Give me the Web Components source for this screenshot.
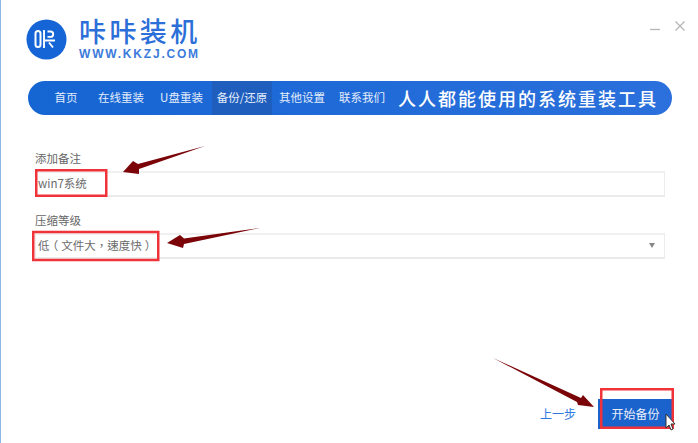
<!DOCTYPE html>
<html lang="zh">
<head>
<meta charset="utf-8">
<title>咔咔装机</title>
<style>
html, body { margin: 0; height: 100%; background: #fff; }
body { font-family: "Noto Sans CJK SC", "Liberation Sans", sans-serif; }
</style>
</head>
<body>
<backup-app></backup-app>

<script>
const FONT = `"Noto Sans CJK SC", "Liberation Sans", sans-serif`;
const LATIN_FIRST = `"Liberation Sans", "Noto Sans CJK SC", sans-serif`;

class AppHeader extends HTMLElement {
  constructor() {
    super();
    this.attachShadow({ mode: "open" });
    this.shadowRoot.innerHTML = `
<style>
:host { display: flex; height: 81px; box-sizing: border-box; padding: 19px 0 0 25px; position: relative; }
.mark { width: 41px; height: 41px; flex: none; }
.brand { margin-left: 12px; display: flex; flex-direction: column; color: #2c6fd8; }
.name { font: 500 27px/28px ${LATIN_FIRST}; letter-spacing: 3.4px; height: 29px; white-space: nowrap; }
.url { font: 700 12px/12px ${LATIN_FIRST}; letter-spacing: 1.8px; white-space: nowrap; color: #3d7bdb; }
.controls { position: absolute; right: 13px; top: 21px; display: flex; gap: 15px; }
svg { display: block; }
</style>
<svg class="mark" viewBox="0 0 41 41">
  <circle cx="20.5" cy="20.5" r="20" fill="#1565d6"/>
  <rect x="9.5" y="12" width="5" height="16" rx="2.5" fill="none" stroke="#fff" stroke-width="2"/>
  <path d="M18 11v18M19 21.500h10M21.500 12.500h3a2.700 2.700 0 0 1 0 5.400h-3M23 23.500l4 5" fill="none" stroke="#fff" stroke-width="1.900"/>
</svg>
<div class="brand">
  <div class="name">咔咔装机</div>
  <div class="url">WWW.KKZJ.COM</div>
</div>
<div class="controls">
  <svg width="10" height="10" viewBox="0 0 10 10"><path d="M0 8.500h10" stroke="#b5b5b5" stroke-width="1.3"/></svg>
  <svg width="10" height="10" viewBox="0 0 10 10"><path d="M.5 .5l9 9M9.500 .5l-9 9" stroke="#b5b5b5" stroke-width="1.3"/></svg>
</div>`;
  }
}

class NavItem extends HTMLElement {
  constructor() {
    super();
    this.attachShadow({ mode: "open" });
    this.shadowRoot.innerHTML = `
<style>
:host { display: flex; align-items: center; justify-content: center; width: 60px; flex: none; font: 11.5px/1 ${FONT}; color: #e3edfb; white-space: nowrap; }
:host([active]) { background: #1f5ebd; }
</style>
<slot></slot>`;
  }
}

class NavBar extends HTMLElement {
  constructor() {
    super();
    this.attachShadow({ mode: "open" });
    this.shadowRoot.innerHTML = `
<style>
:host { display: flex; height: 34px; margin: 0 26px 0 27px; padding-left: 13px; border-radius: 17px; background: linear-gradient(90deg, #1565d3, #2b70dc); }
.slogan { margin-left: 6px; align-self: center; font: 500 18px/1 ${FONT}; letter-spacing: 2px; color: #fff; white-space: nowrap; }
</style>
<slot></slot>
<div class="slogan">人人都能使用的系统重装工具</div>`;
  }
}

class FormField extends HTMLElement {
  constructor() {
    super();
    this.attachShadow({ mode: "open" });
    this.shadowRoot.innerHTML = `
<style>
:host { display: block; }
label { display: block; font: 11.5px/16px ${FONT}; color: #666; margin-bottom: 5px; }
.box { position: relative; display: flex; align-items: center; height: 26px; box-sizing: border-box; padding-left: 2px;
  border: 1px solid #ececec; border-top: 2px solid #f0f0f0; border-bottom: 2px solid #ebebeb; font: 11.5px/1 ${FONT}; color: #6a6a6a; white-space: pre; }
.caret { display: none; position: absolute; right: 9px; top: 8px; width: 0; height: 0; border: 3.5px solid transparent; border-top: 5px solid #888; border-bottom: 0; }
:host([select]) .caret { display: block; }
</style>
<label></label>
<div class="box"><slot></slot><span class="caret"></span></div>`;
    this.shadowRoot.querySelector("label").textContent = this.getAttribute("label");
  }
}

class ActionBar extends HTMLElement {
  constructor() {
    super();
    this.attachShadow({ mode: "open" });
    this.shadowRoot.innerHTML = `
<style>
:host { display: flex; justify-content: flex-end; align-items: center; gap: 22px; height: 30px; }
a { font: 12px/1 ${FONT}; color: #2f78e0; }
button { width: 75px; height: 30px; padding: 0; border: 0; background: #1a62cc; color: #e9f0fb; font: 12px/1 ${FONT}; }
</style>
<a>上一步</a>
<button>开始备份</button>`;
  }
}

// 赤い枠と矢印は画面の上に重ねる注釈
class NoteLayer extends HTMLElement {
  constructor() {
    super();
    this.attachShadow({ mode: "open" });
    this.shadowRoot.innerHTML = `
<style>
:host { position: absolute; inset: 0; pointer-events: none; }
svg { display: block; }
</style>
<svg width="698" height="443" viewBox="0 0 698 443">
  <g fill="none" stroke="#f03338" stroke-width="2.500">
    <rect x="36.250" y="170.250" width="70" height="25.500"/>
    <rect x="33.250" y="232" width="125" height="28"/>
    <rect x="601.250" y="389.250" width="71.500" height="38.500"/>
  </g>
  <g fill="#7a0408">
    <path d="M205 146L138 164L133 161L123 172L139 174L139 169z"/>
    <path d="M260 228L184 238.500L180 235L167 243L183 248L184 244z"/>
    <path d="M493 358L581 398L583 395L594 407L578 405L577 402z"/>
  </g>
  <path d="M666 414v14l3-3 2 5 2-1-2-5h4z" fill="#fff" stroke="#333" stroke-width="1"/>
</svg>`;
  }
}

class BackupApp extends HTMLElement {
  constructor() {
    super();
    this.attachShadow({ mode: "open" });
    this.shadowRoot.innerHTML = `
<style>
:host { display: block; position: relative; width: 698px; height: 443px; overflow: hidden; box-sizing: border-box; border-left: 1px solid #8fb5e8; background: #fff; }
main { margin: 0 0 0 -1px; padding: 35px 33px 0 35px; display: flex; flex-direction: column; gap: 15px; }
action-bar { margin: 125px -8px 0 0; }
note-layer { left: -1px; }
.level { font-family: "Noto Sans CJK TC", "Noto Sans CJK SC", sans-serif; }
/* 括弧は半角幅の字形にして左右に余白を足し、中央に見せる */
.paren { font-feature-settings: "halt"; margin: 0 3px; }
</style>
<app-header></app-header>
<nav-bar>
  <nav-item style="width:50px">首页</nav-item>
  <nav-item>在线重装</nav-item>
  <nav-item style="width:61px">U盘重装</nav-item>
  <nav-item active>备份/还原</nav-item>
  <nav-item>其他设置</nav-item>
  <nav-item>联系我们</nav-item>
</nav-bar>
<main>
  <form-field label="添加备注">win7系统</form-field>
  <form-field label="压缩等级" select><span class="level" lang="zh-Hant">低<span class="paren">（</span>文件大，速度快<span class="paren">）</span></span></form-field>
  <action-bar></action-bar>
</main>
<note-layer></note-layer>`;
  }
}

customElements.define("app-header", AppHeader);
customElements.define("nav-item", NavItem);
customElements.define("nav-bar", NavBar);
customElements.define("form-field", FormField);
customElements.define("action-bar", ActionBar);
customElements.define("note-layer", NoteLayer);
customElements.define("backup-app", BackupApp);
</script>
</body>
</html>
